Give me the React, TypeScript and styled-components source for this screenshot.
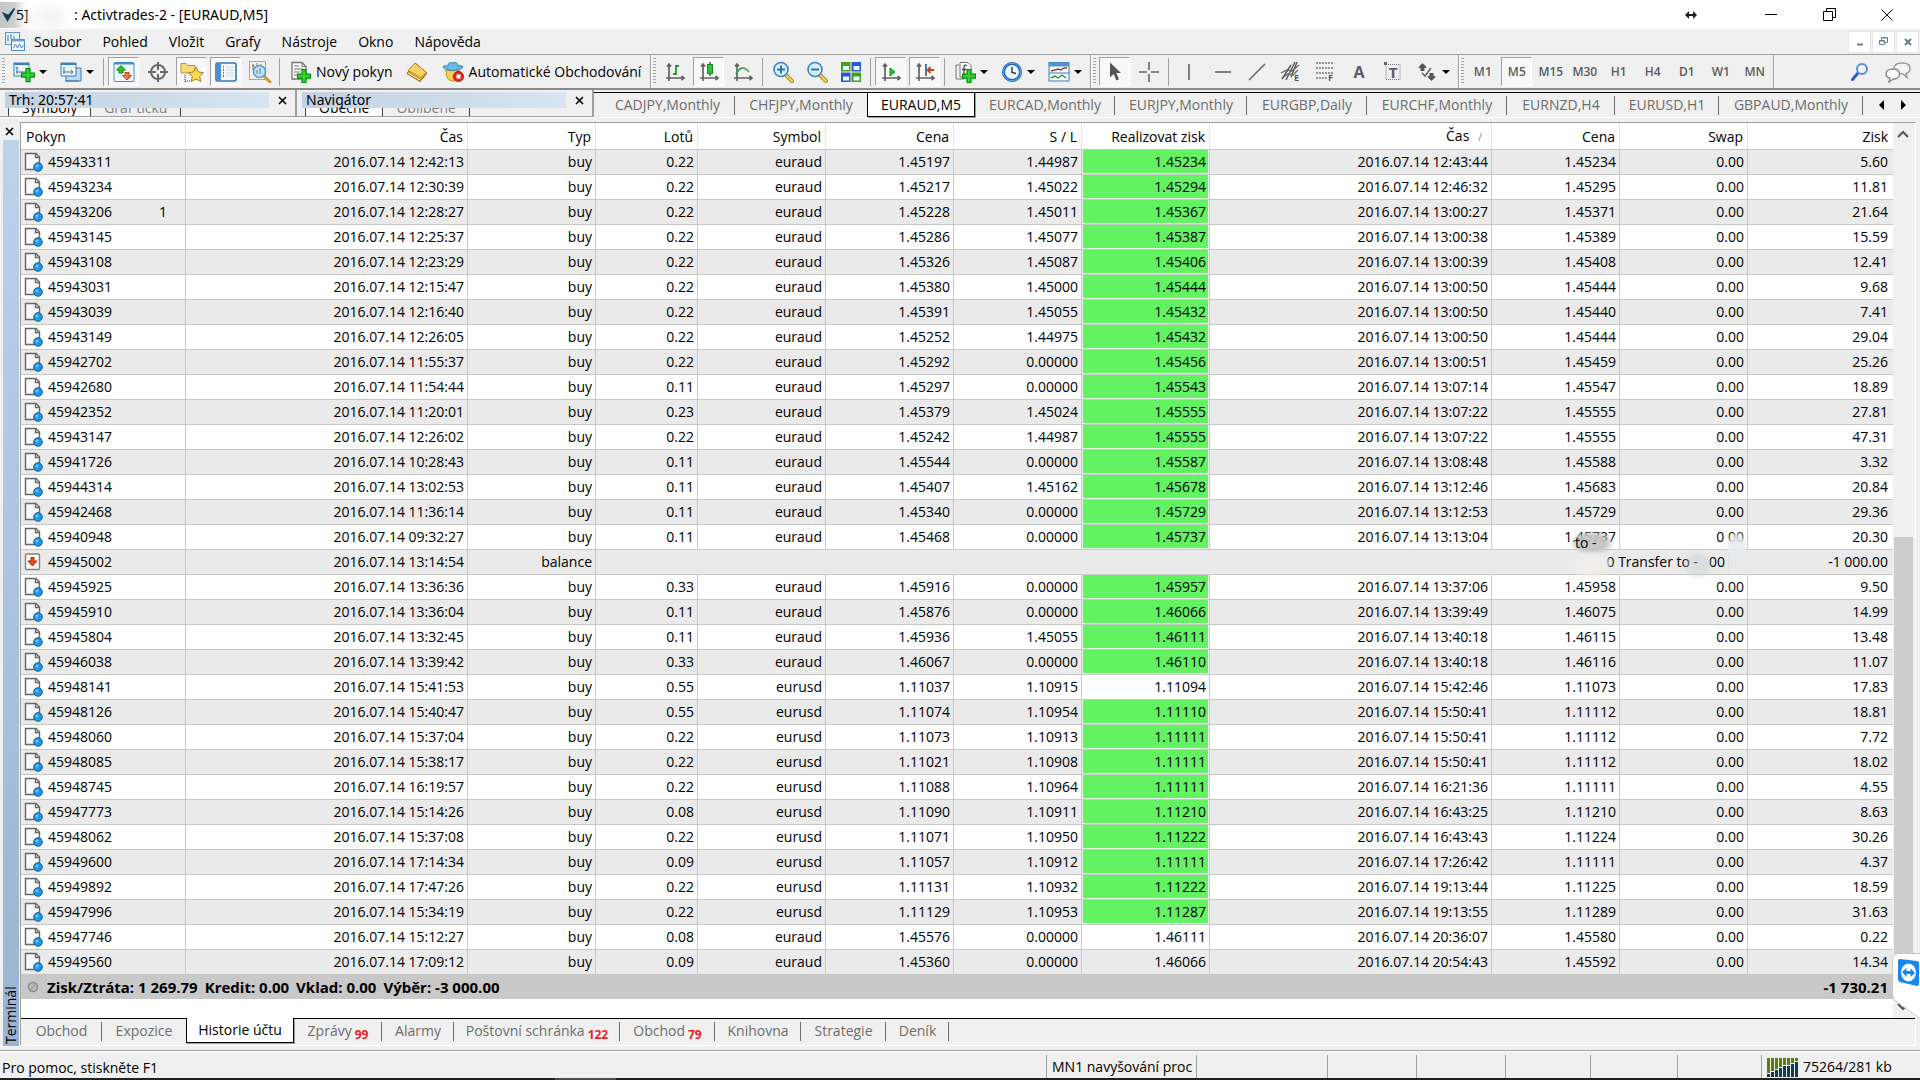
import React from 'react';
import styled, { createGlobalStyle, css } from 'styled-components';

const GlobalStyle = createGlobalStyle`
  *, *::before, *::after { box-sizing: border-box; }
  body { margin: 0; background: #f0f0f0; }
  button { font: inherit; color: inherit; border: 0; padding: 0; margin: 0; background: none; }
`;

const Shell = styled.div`
  min-height: 100vh;
  display: flex;
  flex-direction: column;
  background: #f0f0f0;
  color: #000;
  font-family: "Open Sans", "Noto Sans", sans-serif;
  font-size: 14px;
  line-height: 20px;
  white-space: nowrap;
  overflow: hidden;
`;

/* ---------- title bar and menu ---------- */

const TitleBar = styled.header`
  position: relative;
  display: flex;
  align-items: center;
  height: 29px;
  padding-right: 4px;
  background: #fff;
`;

const AppBadge = styled.div`
  display: flex;
  align-items: center;
  width: 74px;
  height: 26px;
  padding-left: 2px;
  background: linear-gradient(90deg, #c4c4c4 0, #cfcfcf 14px, #fff 26px);
`;

const TitleSmudge = styled.div`
  position: absolute;
  left: 27px;
  top: 2px;
  width: 44px;
  height: 34px;
  background:
    radial-gradient(ellipse at 30% 60%, rgba(250, 250, 250, 1) 0, rgba(250, 250, 250, 0) 60%),
    radial-gradient(ellipse at 50% 50%, rgba(232, 234, 236, 0.9) 0, rgba(240, 240, 240, 0) 70%);
`;

const Title = styled.h1`
  flex: 1;
  margin: 0;
  font-family: "Noto Sans", "Open Sans", sans-serif;
  font-size: 14px;
  font-weight: 400;
`;

const WindowButtons = styled.div<{ $apart?: boolean }>`
  display: flex;
  align-items: center;
  padding-left: ${p => (p.$apart ? '22px' : '0')};
`;

const WindowButton = styled.button`
  display: grid;
  place-items: center;
  width: 58px;
  height: 28px;
`;

const MenuBar = styled.nav`
  display: flex;
  align-items: center;
  height: 26px;
  padding: 0 1px 0 5px;
  border-bottom: 1px solid #a0a0a0;
`;

const MenuItems = styled.div`
  flex: 1;
  display: flex;
  gap: 21px;
  padding-left: 8px;
`;

const MdiButtons = styled.div`
  display: flex;
  gap: 1px;
`;

const MdiButton = styled.button`
  display: grid;
  place-items: center;
  width: 23px;
  height: 22px;
  background: #fff;
  border: 1px solid #e6e6e6;
`;

/* ---------- toolbar ---------- */

const Toolbar = styled.div`
  display: flex;
  height: 35px;
  padding-left: 1px;
  border-bottom: 2px solid #8a8a8a;
`;

const ToolGroup = styled.div`
  display: flex;
  align-items: center;
  gap: 3px;
  padding: 0 3px 0 1px;
  border-right: 1px solid #a0a0a0;
  box-shadow: 1px 0 0 #fff;
  margin-right: 1px;
`;

const Grip = styled.span`
  width: 3px;
  height: 27px;
  background: repeating-linear-gradient(180deg, #a6a6a6 0 1px, #f0f0f0 1px 3px);
`;

const ToolSep = styled.span`
  width: 1px;
  height: 28px;
  margin: 0 1px;
  background: #a0a0a0;
`;

const ToolButton = styled.button<{ $on?: boolean; $drop?: boolean; $text?: boolean }>`
  display: flex;
  align-items: center;
  justify-content: center;
  gap: 4px;
  width: ${p => (p.$text ? 'auto' : p.$drop ? '44px' : '31px')};
  height: 29px;
  padding: ${p => (p.$text ? '0 5px' : '0')};
  border: 1px solid transparent;
  ${p =>
    p.$on &&
    css`
      background: #f8f8f8;
      border-color: #a0a0a0 #fff #fff #a0a0a0;
    `}
`;

const Period = styled(ToolButton)`
  font-size: 12px;
  font-weight: 600;
  color: #5c5c5c;
`;

const Caret = styled.span`
  border: 4px solid transparent;
  border-top-color: #000;
  border-bottom: 0;
`;

const ToolEnd = styled.div`
  flex: 1;
  display: flex;
  align-items: center;
  justify-content: flex-end;
  gap: 1px;
`;

/* ---------- docked panels and chart tabs ---------- */

const DockRow = styled.div`
  display: flex;
  height: 28px;
  border-bottom: 1px solid #fff;
`;

const DockPanel = styled.section`
  display: flex;
  flex-direction: column;
  width: 297px;
  padding: 2px 0 0 5px;
  border-right: 2px solid #a0a0a0;
  border-bottom: 1px solid #a0a0a0;
`;

const DockCaption = styled.div`
  display: flex;
  align-items: center;
  height: 16px;
`;

const DockTitle = styled.h2`
  flex: 1;
  margin: 0;
  padding-left: 4px;
  font-family: "Noto Sans", "Open Sans", sans-serif;
  font-size: 14px;
  font-weight: 400;
  line-height: 16px;
  background: linear-gradient(90deg, #c3d1e0, #d7e4f2);
`;

const DockClose = styled.button`
  display: grid;
  place-items: center;
  width: 26px;
  height: 16px;
`;

const DockTabs = styled.div`
  display: flex;
  align-items: flex-end;
  height: 8px;
  padding-left: 3px;
  overflow: hidden;
`;

const DockTab = styled.button<{ $on?: boolean }>`
  height: 16px;
  padding: 0 13px;
  line-height: 16px;
  color: ${p => (p.$on ? '#000' : '#808080')};
  background: ${p => (p.$on ? '#fff' : 'none')};
  border-right: 1px solid #404040;
  border-left: ${p => (p.$on ? '1px solid #404040' : '0')};
`;

const ChartTabs = styled.div`
  flex: 1;
  display: flex;
  margin-top: 2px;
  padding-left: 6px;
  border-top: 1px solid #000;
`;

const Tab = styled.button<{ $on?: boolean; $next?: boolean; $w: number }>`
  display: flex;
  align-items: center;
  justify-content: center;
  gap: 3px;
  width: ${p => p.$w}px;
  height: 24px;
  color: #6d6d6d;
  background: linear-gradient(#6d6d6d, #6d6d6d) right center / ${p => (p.$next ? '0' : '1px')} 19px no-repeat;
  ${p =>
    p.$on &&
    css`
      height: 25px;
      margin-top: -1px;
      color: #000;
      background: #fff;
      border: 1px solid #000;
      border-top: 0;
      box-shadow: 1px 1px 0 #a0a0a0;
    `}
`;

const ChartTab = styled(Tab)`
  ${p => p.$on && css`border-top: 1px solid #000;`}
`;

const TabCount = styled.span`
  padding-top: 8px;
  font-size: 12px;
  font-weight: 700;
  line-height: 16px;
  color: #ee1c24;
`;

const TabArrows = styled.div`
  display: flex;
  align-items: center;
  gap: 17px;
  padding-left: 15px;
`;

/* ---------- terminal ---------- */

const Terminal = styled.main`
  position: relative;
  flex: 1;
  display: flex;
  padding-top: 4px;
`;

const Side = styled.aside`
  display: flex;
  flex-direction: column;
  width: 20px;
  padding: 0 1px 0 3px;
`;

const SideTitle = styled.div`
  flex: 1;
  padding-top: 2px;
  line-height: 16px;
  background: linear-gradient(0deg, #bdd2eb, #99b4d1);
  writing-mode: vertical-rl;
  transform: rotate(180deg);
`;

const SideClose = styled.button`
  display: grid;
  place-items: center;
  width: 13px;
  height: 18px;
`;

const Frame = styled.div`
  flex: 1;
  min-width: 0;
  display: flex;
  flex-direction: column;
  margin-right: 4px;
  border-top: 1px solid #a0a0a0;
  border-left: 1px solid #a0a0a0;
  border-right: 1px solid #fff;
  border-bottom: 1px solid #fff;
`;

const Sheet = styled.div`
  flex: 1;
  display: flex;
`;

const GridArea = styled.div`
  flex: 1;
  min-width: 0;
  background: #fff;
`;

const Grid = styled.table`
  width: 100%;
  table-layout: fixed;
  border-collapse: separate;
  border-spacing: 0;
`;

const HeadCell = styled.th`
  height: 27px;
  padding: 1px 4px 0 5px;
  font-weight: 400;
  text-align: right;
  border-right: 1px solid #e4e4e4;
  border-bottom: 1px solid #c8c8c8;
  &:first-child { text-align: left; }
  &:last-child { padding-right: 5px; border-right: 0; }
`;

const SortMark = styled.span`
  padding: 0 5px 0 9px;
  font-size: 10px;
  color: #808080;
`;

const Row = styled.tr`
  &:nth-child(odd) { background: #eaeaea; }
`;

const Cell = styled.td<{ $hit?: boolean; $open?: boolean }>`
  position: relative;
  height: 25px;
  padding: 0 3px;
  text-align: right;
  border-right: ${p => (p.$open ? '0' : '1px solid #c8c8c8')};
  border-bottom: 1px solid #c8c8c8;
  ${p =>
    p.$hit &&
    css`
      background: #62f262;
      box-shadow: inset -1px -1px 0 #e9f7e9, inset 1px 0 0 #e9f7e9;
    `}
  &:last-child { padding-right: 5px; border-right: 0; }
`;

const Order = styled.div`
  display: flex;
  align-items: center;
  gap: 4px;
`;

const OrderNote = styled.span`
  flex: 1;
  padding-right: 15px;
  text-align: right;
`;

const Comment = styled.span`
  margin-right: 16px;
  padding-right: 3px;
  white-space: pre;
  border-right: 1px solid #dcdcdc;
`;

const Smudge = styled.span<{ $right: number; $top: number; $w: number; $h: number; $tone: string }>`
  position: absolute;
  z-index: 1;
  right: ${p => p.$right}px;
  top: ${p => p.$top}px;
  width: ${p => p.$w}px;
  height: ${p => p.$h}px;
  padding-left: 6px;
  line-height: ${p => p.$h}px;
  text-align: left;
  background: radial-gradient(closest-side, ${p => p.$tone} 60%, rgba(238, 238, 238, 0) 100%);
`;

const Summary = styled.td`
  height: 24px;
  padding: 0 5px 0 4px;
  font-size: 15px;
  font-weight: 700;
  background: #c8c8c8;
`;

const SummaryLine = styled.div`
  display: flex;
  align-items: center;
  gap: 8px;
`;

const SummaryParts = styled.div`
  flex: 1;
  display: flex;
  gap: 7px;
`;

const ScrollTrack = styled.div`
  display: flex;
  flex-direction: column;
  width: 20px;
  margin-right: 2px;
`;

const ScrollButton = styled.button`
  display: grid;
  place-items: center;
  width: 20px;
  height: 22px;
`;

const ScrollGap = styled.div`
  flex: 392;
`;

const ScrollThumb = styled.div`
  flex: 460;
  margin-left: 1px;
  background: #cdcdcd;
`;

const BottomTabs = styled.div`
  display: flex;
  height: 27px;
  border-top: 1px solid #000;
`;

const RemoteTab = styled.button`
  position: absolute;
  right: 0;
  bottom: 27px;
  width: 28px;
  height: 66px;
`;

/* ---------- status bar ---------- */

const StatusBar = styled.footer`
  display: flex;
  height: 28px;
  margin-top: 4px;
  border-top: 1px solid #a0a0a0;
  box-shadow: inset 0 1px 0 #fff;
`;

const StatusText = styled.div`
  flex: 1;
  padding: 7px 2px 0;
`;

const StatusCell = styled.div<{ $w: number }>`
  display: flex;
  align-items: center;
  gap: 5px;
  width: ${p => p.$w}px;
  margin-top: 4px;
  padding-left: 5px;
  overflow: hidden;
  border-left: 1px solid #a0a0a0;
`;

const ScreenEdge = styled.div`
  height: 2px;
  background: linear-gradient(90deg, #202020 555px, #4c4c4c 555px 616px, #202020 616px);
`;

/* ---------- icons ---------- */

const Drawing = styled.svg`
  display: block;
  flex: none;
  font-family: "Open Sans", "Noto Sans", sans-serif;
  font-weight: 700;
`;

const Svg = ({ w = 22, h = 22, children }: { w?: number; h?: number; children: React.ReactNode }) => (
  <Drawing width={w} height={h} viewBox={`0 0 ${w} ${h}`} fill="none" aria-hidden="true">
    {children}
  </Drawing>
);

const Plus = ({ x = 7, y = 8 }: { x?: number; y?: number }) => (
  <path
    transform={`translate(${x} ${y})`}
    d="M5 .7h4v4.5h4.500v4H9v4.500H5V9.200H.5v-4H5z"
    fill="#2fd52f"
    stroke="#0b8a14"
    strokeWidth="1.2"
  />
);

const Axes = () => (
  <path d="M5 3v17M2 17h18M3 5.500 5 3l2 2.500M17.500 15l2.500 2-2.500 2" stroke="#626262" strokeWidth="1.7" />
);

const Lens = ({ plus }: { plus?: boolean }) => (
  <Svg>
    <path d="m14 14 6 6" stroke="#b98a1c" strokeWidth="4" strokeLinecap="round" />
    <path d="m14 14 6 6" stroke="#f3d25a" strokeWidth="2" strokeLinecap="round" />
    <circle cx="9" cy="8.500" r="7" fill="#d6effc" stroke="#3b84c4" strokeWidth="1.600" />
    <path d={plus ? 'M5 8.500h8M9 4.500v8' : 'M5 8.500h8'} stroke="#2f6fae" strokeWidth="2" />
  </Svg>
);

const icons: Record<string, React.ReactNode> = {
  newChart: (
    <Svg>
      <rect x="1" y="2" width="15" height="13" fill="#eaf4fd" stroke="#3b7fb8" />
      <path d="M1 3h15" stroke="#3b7fb8" strokeWidth="2" />
      <path d="M4 6v7M3 11h10M3 7.500 4 6l1 1.500" stroke="#4b7796" />
      <Plus x={8} y={7} />
    </Svg>
  ),
  profiles: (
    <Svg>
      <path d="M6 7h15v13H6z" fill="#bcd9f2" stroke="#3b7fb8" />
      <path d="M1 2h15v13H1z" fill="#eaf4fd" stroke="#3b7fb8" />
      <path d="M1 3h15" stroke="#3b7fb8" strokeWidth="2" />
      <path d="M4 6v7M3 11h10M11 9l2 2-2 2M5 20h14" stroke="#4b7796" />
    </Svg>
  ),
  market: (
    <Svg>
      <rect x="1" y="1.500" width="20" height="19" rx="1" fill="#f3f9fe" stroke="#3f8fd0" />
      <path d="M1 2.500h20" stroke="#3f8fd0" strokeWidth="2" />
      <path d="M4 6h14M4 9h14M4 12h14M4 15h14" stroke="#d9e4ee" strokeDasharray="2 1" />
      <path d="m8 4.500 4.500 4.500H10v3H6V9H3.500z" fill="#2cc02c" stroke="#178a17" />
      <path d="m14 19-4.500-4.500H12v-3h4v3h2.500z" fill="#f4723d" stroke="#c8431b" />
    </Svg>
  ),
  target: (
    <Svg>
      <circle cx="11" cy="11" r="7" stroke="#6a6a6a" strokeWidth="2" />
      <path d="M11 1v8M11 13v8M1 11h8M13 11h8" stroke="#6a6a6a" strokeWidth="2" />
    </Svg>
  ),
  favorites: (
    <Svg w={24} h={22}>
      <path d="M1 12V2.500h5l1.500 2H15V12z" fill="#f7dc7e" stroke="#b8922e" />
      <path d="M5 14v7M5 20h5" stroke="#333" strokeDasharray="1 1" />
      <path d="m16 6 2.400 5 5 .6-3.700 3.600 1 5.300L16 18l-4.700 2.500 1-5.300-3.700-3.600 5-.6z" fill="#fbd855" stroke="#a8811d" />
    </Svg>
  ),
  navigator: (
    <Svg>
      <rect x="1" y="2" width="20" height="18" rx="1.500" fill="#f6faff" stroke="#3474b4" strokeWidth="1.600" />
      <rect x="2" y="3" width="4" height="16" fill="#4f91cf" />
      <path d="M8 6h1M8 12h1" stroke="#e02c2c" strokeWidth="1.600" />
      <path d="M8 9h1M8 15h1" stroke="#333" strokeWidth="1.600" />
      <path d="M11 6h8M11 9h8M11 12h8M11 15h8" stroke="#c5d5e6" />
    </Svg>
  ),
  tester: (
    <Svg w={24} h={22}>
      <rect x="1.500" y=".5" width="16" height="18" fill="#f4f1ea" stroke="#a9a39a" />
      <path d="M5 3v6M4 5h3M9 2v4M13 3v6M15 5v4" stroke="#777" />
      <path d="m16 15 6 6" stroke="#d19b2b" strokeWidth="3" strokeLinecap="round" />
      <circle cx="11.500" cy="10.500" r="6" fill="#bfe0f6" stroke="#5b9bcd" strokeWidth="1.600" />
      <path d="M9 13V9M12 13V7" stroke="#6fa5cf" strokeWidth="1.500" />
    </Svg>
  ),
  newOrder: (
    <Svg>
      <path d="M2 1.500h10l4 4V18H2z" fill="#fbfbfb" stroke="#757575" strokeWidth="1.300" />
      <path d="M12 1.500v4h4M4 5h5M4 8h9M4 11h6M4 14h4" stroke="#757575" />
      <Plus x={7} y={8} />
    </Svg>
  ),
  book: (
    <Svg>
      <path d="m9 2 12 10-7 8.500L1 12.500z" fill="#d9a52c" stroke="#8a600c" />
      <path d="m9 2 11.500 9.500-6 5.500L2 9.500z" fill="#f6d163" stroke="#b98a1c" />
      <path d="m2 12 12 7" stroke="#fff1c0" />
    </Svg>
  ),
  expert: (
    <Svg w={23} h={22}>
      <path d="M4 9c0 7 2 11 7 11 4 0 6-4 6-11z" fill="#f6cf52" stroke="#b98a1c" />
      <path d="M1 6c2 4 16 5 20 0-1-2-3-1-5-1 0-3-2-4-5-3-3-1-5 0-5 3-2 0-4-1-5 1z" fill="#6fb9e6" stroke="#2f7fb6" />
      <circle cx="16.500" cy="15.500" r="5" fill="#e22b22" stroke="#a9140d" />
      <rect x="14.500" y="13.500" width="4" height="4" fill="#fff" />
    </Svg>
  ),
  bars: (
    <Svg>
      <Axes />
      <path d="M12 4v10M12 5h3M9 13h3" stroke="#1f9a2b" strokeWidth="1.800" />
    </Svg>
  ),
  candles: (
    <Svg>
      <Axes />
      <path d="M12 1v14" stroke="#178a22" strokeWidth="1.600" />
      <rect x="9.500" y="3.500" width="5" height="9" fill="#29c43a" stroke="#178a22" />
    </Svg>
  ),
  line: (
    <Svg>
      <Axes />
      <path d="M4 13c4-7 8-8 13-2" stroke="#3c9b47" strokeWidth="1.600" />
    </Svg>
  ),
  zoomIn: <Lens plus />,
  zoomOut: <Lens />,
  tile: (
    <Svg>
      <rect x="1" y="1" width="9.500" height="9.500" fill="#3fa21e" />
      <rect x="11.500" y="1" width="9.500" height="9.500" fill="#2b58cf" />
      <rect x="1" y="11.500" width="9.500" height="9.500" fill="#2b58cf" />
      <rect x="11.500" y="11.500" width="9.500" height="9.500" fill="#3fa21e" />
      <path d="M3 5h6v4H3zM13.500 5h6v4h-6zM3 15.500h6v4H3zM13.500 15.500h6v4h-6z" fill="#eef6ff" />
    </Svg>
  ),
  scroll: (
    <Svg>
      <Axes />
      <path d="m10 7 5 4-5 4z" fill="#2cc43c" stroke="#178a22" />
    </Svg>
  ),
  shift: (
    <Svg>
      <Axes />
      <path d="M12 3v12" stroke="#2a6fa8" strokeWidth="1.800" />
      <path d="M20 9h-6M16.500 6 13.500 9l3 3" stroke="#c8431b" strokeWidth="1.800" />
    </Svg>
  ),
  indicators: (
    <Svg>
      <path d="M6 1.500h8l3 3V16H6z" fill="#fff" stroke="#757575" />
      <path d="M2 4h3M2 4v14h8" stroke="#757575" />
      <path d="M13 4.500c-2-1-3 0-3 2V13M8 8.500h4.500" stroke="#444" strokeWidth="1.300" />
      <Plus x={8} y={8} />
    </Svg>
  ),
  clock: (
    <Svg>
      <circle cx="11" cy="11" r="8.500" fill="#eaf5fe" stroke="#1d63b8" strokeWidth="3" />
      <circle cx="11" cy="11" r="8.800" stroke="#64aef0" />
      <path d="M11 6v5.500l4 1" stroke="#333" strokeWidth="1.400" />
    </Svg>
  ),
  template: (
    <Svg>
      <rect x="1" y="1.500" width="20" height="18.500" fill="#f5fafe" stroke="#3b7fb8" />
      <path d="M1 3.500h20" stroke="#4d94d0" strokeWidth="4" />
      <path d="M1 12h20" stroke="#3b7fb8" />
      <path d="m3 10 4-1 3-1 3 1 3-2h3" stroke="#a8381f" strokeWidth="1.400" />
      <path d="m3 17 4-2 3 2 4-3 4 3" stroke="#2a8f37" strokeWidth="1.400" />
    </Svg>
  ),
  cursor: (
    <Svg>
      <path d="M6 1.500v15l3.700-3.500 2.600 6.500 2.700-1.200-2.700-6.300H17z" fill="#555" />
    </Svg>
  ),
  cross: (
    <Svg>
      <path d="M11 1v8M11 13v8M1 11h8M13 11h8" stroke="#666" strokeWidth="1.600" />
    </Svg>
  ),
  vline: <Svg><path d="M11 3v16" stroke="#666" strokeWidth="1.600" /></Svg>,
  hline: <Svg><path d="M3 11h16" stroke="#666" strokeWidth="1.600" /></Svg>,
  trend: <Svg><path d="M3 19 19 3" stroke="#666" strokeWidth="1.600" /></Svg>,
  channel: (
    <Svg w={24} h={24}>
      <path d="M3 19 12 5M7 20 16 2M12 17l6-15" stroke="#555" strokeWidth="1.400" />
      <path d="m2 13 6-3 5 1 7-6M3 18l6-4 5 1 5-5" stroke="#666" strokeWidth="1.200" />
      <text x="15" y="21" fontSize="9" fill="#555">E</text>
    </Svg>
  ),
  fibo: (
    <Svg w={24} h={24}>
      <path d="M3 3h18M3 8h18M3 13h18M3 18h11" stroke="#777" strokeWidth="1.500" strokeDasharray="2 1" />
      <text x="15" y="21" fontSize="9" fill="#555">F</text>
    </Svg>
  ),
  text: (
    <Svg>
      <text x="11" y="17" textAnchor="middle" fontSize="16" fill="#5c5c5c">A</text>
    </Svg>
  ),
  label: (
    <Svg>
      <rect x="4" y="3.500" width="14" height="15" stroke="#777" strokeDasharray="1 1" />
      <rect x="2" y="1" width="3" height="3" fill="#666" />
      <text x="11" y="17" textAnchor="middle" fontSize="15" fill="#5c5c5c">T</text>
    </Svg>
  ),
  shapes: (
    <Svg>
      <path d="m6.500 2 4.500 4.500-2.500.5v3h-4V7L2 6.500zM15.500 20 11 15.500l2.500-.5v-3h4v3l2.500.5z" fill="#555" />
      <path d="m6 12 3 3 6-8" stroke="#666" strokeWidth="1.600" />
    </Svg>
  ),
  search: (
    <Svg>
      <path d="m3.500 18.500 5-6" stroke="#2f5fc0" strokeWidth="3" strokeLinecap="round" />
      <circle cx="13" cy="8" r="5" fill="#eef4fd" stroke="#5f8cdc" strokeWidth="2" />
    </Svg>
  ),
  chat: (
    <Svg w={28} h={22}>
      <path d="M18 2c5 0 8 2 8 5.500S24 12 22 12.500l1 4-4-3.500c-6 0-9-2-9-5.500S13 2 18 2z" fill="#f4f4f4" stroke="#999" strokeWidth="1.400" />
      <path d="M9 8c4 0 6.500 2 6.500 5S13 18 9.500 18L5 21l1-3.700C3 16.500 2 15 2 13c0-3 3-5 7-5z" fill="#f8f8f8" stroke="#888" strokeWidth="1.400" />
    </Svg>
  ),
};

const CloseGlyph = () => (
  <Svg w={9} h={9}><path d="m1 1 7 7M8 1 1 8" stroke="#000" strokeWidth="1.600" /></Svg>
);

const OrderIcon = () => (
  <Svg w={20} h={20}>
    <path d="M1.500 1.500H12l3.500 3.500v12.500h-14z" fill="#f8f8f8" stroke="#666" strokeWidth="1.400" />
    <path d="M11.500 1.500V5.500h4" stroke="#666" strokeWidth="1.400" />
    <circle cx="14" cy="15" r="4.300" fill="#1f97e8" stroke="#0f5f9c" />
    <circle cx="13" cy="14" r="1.500" fill="#6cc3f8" />
  </Svg>
);

const BalanceIcon = () => (
  <Svg w={20} h={20}>
    <rect x="1.500" y="2" width="14" height="15.500" rx="1" fill="#fdf8f4" stroke="#8a7f7a" strokeWidth="1.400" />
    <path d="M7 5.500h3V9h3l-4.500 5L4 9h3z" fill="#ea4c1d" stroke="#a92a08" />
  </Svg>
);

/* ---------- data ---------- */

type Tool = { id: string; label: string; on?: boolean; drop?: boolean; text?: string };

const mainTools: (Tool | null)[] = [
  { id: 'newChart', label: 'Nový graf', drop: true },
  { id: 'profiles', label: 'Profily', drop: true },
  null,
  { id: 'market', label: 'Trh', on: true },
  { id: 'target', label: 'Okno dat' },
  { id: 'favorites', label: 'Navigátor', on: true },
  { id: 'navigator', label: 'Terminál', on: true },
  { id: 'tester', label: 'Tester strategií' },
  null,
  { id: 'newOrder', label: 'Nový pokyn', text: 'Nový pokyn' },
  { id: 'book', label: 'MetaEditor' },
  { id: 'expert', label: 'Automatické Obchodování', text: 'Automatické Obchodování' },
];

const chartTools: (Tool | null)[] = [
  { id: 'bars', label: 'Sloupce' },
  { id: 'candles', label: 'Svíčky', on: true },
  { id: 'line', label: 'Čára' },
  null,
  { id: 'zoomIn', label: 'Přiblížit' },
  { id: 'zoomOut', label: 'Oddálit' },
  { id: 'tile', label: 'Dlaždice' },
  null,
  { id: 'scroll', label: 'Posun grafu', on: true },
  { id: 'shift', label: 'Odsazení grafu', on: true },
  null,
  { id: 'indicators', label: 'Indikátory', drop: true },
  { id: 'clock', label: 'Periody', drop: true },
  { id: 'template', label: 'Šablony', drop: true },
];

const drawTools: (Tool | null)[] = [
  { id: 'cursor', label: 'Kurzor', on: true },
  { id: 'cross', label: 'Nitkový kříž' },
  null,
  { id: 'vline', label: 'Svislá čára' },
  { id: 'hline', label: 'Vodorovná čára' },
  { id: 'trend', label: 'Trendová čára' },
  { id: 'channel', label: 'Kanál' },
  { id: 'fibo', label: 'Fibonacci' },
  { id: 'text', label: 'Text' },
  { id: 'label', label: 'Popisek' },
  { id: 'shapes', label: 'Šipky', drop: true },
];

const periods = ['M1', 'M5', 'M15', 'M30', 'H1', 'H4', 'D1', 'W1', 'MN'];

const chartTabs: [string, number][] = [
  ['CADJPY,Monthly', 135], ['CHFJPY,Monthly', 132], ['EURAUD,M5', 108], ['EURCAD,Monthly', 140],
  ['EURJPY,Monthly', 132], ['EURGBP,Daily', 120], ['EURCHF,Monthly', 140], ['EURNZD,H4', 108],
  ['EURUSD,H1', 104], ['GBPAUD,Monthly', 144],
];

const bottomTabs: [string, number, string?][] = [
  ['Obchod', 81], ['Expozice', 84], ['Historie účtu', 108], ['Zprávy', 88, '99'], ['Alarmy', 72],
  ['Poštovní schránka', 166, '122'], ['Obchod', 95, '79'], ['Knihovna', 86], ['Strategie', 85], ['Deník', 63],
];

const columns: [string, number?][] = [
  ['Pokyn', 165], ['Čas', 282], ['Typ', 128], ['Lotů', 102], ['Symbol', 128], ['Cena', 128], ['S / L', 128],
  ['Realizovat zisk', 128], ['Čas', 282], ['Cena', 128], ['Swap', 128], ['Zisk'],
];

/* order | open time | lots | symbol | price | stop | take | close time | close price | profit ; "-" after take = not hit */
const deals = `45943311|12:42:13|0.22|euraud|1.45197|1.44987|1.45234|12:43:44|1.45234|5.60
45943234|12:30:39|0.22|euraud|1.45217|1.45022|1.45294|12:46:32|1.45295|11.81
45943206|12:28:27|0.22|euraud|1.45228|1.45011|1.45367|13:00:27|1.45371|21.64
45943145|12:25:37|0.22|euraud|1.45286|1.45077|1.45387|13:00:38|1.45389|15.59
45943108|12:23:29|0.22|euraud|1.45326|1.45087|1.45406|13:00:39|1.45408|12.41
45943031|12:15:47|0.22|euraud|1.45380|1.45000|1.45444|13:00:50|1.45444|9.68
45943039|12:16:40|0.22|euraud|1.45391|1.45055|1.45432|13:00:50|1.45440|7.41
45943149|12:26:05|0.22|euraud|1.45252|1.44975|1.45432|13:00:50|1.45444|29.04
45942702|11:55:37|0.22|euraud|1.45292|0.00000|1.45456|13:00:51|1.45459|25.26
45942680|11:54:44|0.11|euraud|1.45297|0.00000|1.45543|13:07:14|1.45547|18.89
45942352|11:20:01|0.23|euraud|1.45379|1.45024|1.45555|13:07:22|1.45555|27.81
45943147|12:26:02|0.22|euraud|1.45242|1.44987|1.45555|13:07:22|1.45555|47.31
45941726|10:28:43|0.11|euraud|1.45544|0.00000|1.45587|13:08:48|1.45588|3.32
45944314|13:02:53|0.11|euraud|1.45407|1.45162|1.45678|13:12:46|1.45683|20.84
45942468|11:36:14|0.11|euraud|1.45340|0.00000|1.45729|13:12:53|1.45729|29.36
45940948|09:32:27|0.11|euraud|1.45468|0.00000|1.45737|13:13:04|1.45737|20.30
45945002|13:14:54|balance
45945925|13:36:36|0.33|euraud|1.45916|0.00000|1.45957|13:37:06|1.45958|9.50
45945910|13:36:04|0.11|euraud|1.45876|0.00000|1.46066|13:39:49|1.46075|14.99
45945804|13:32:45|0.11|euraud|1.45936|1.45055|1.46111|13:40:18|1.46115|13.48
45946038|13:39:42|0.33|euraud|1.46067|0.00000|1.46110|13:40:18|1.46116|11.07
45948141|15:41:53|0.55|eurusd|1.11037|1.10915|1.11094-|15:42:46|1.11073|17.83
45948126|15:40:47|0.55|eurusd|1.11074|1.10954|1.11110|15:50:41|1.11112|18.81
45948060|15:37:04|0.22|eurusd|1.11073|1.10913|1.11111|15:50:41|1.11112|7.72
45948085|15:38:17|0.22|eurusd|1.11021|1.10908|1.11111|15:50:41|1.11112|18.02
45948745|16:19:57|0.22|eurusd|1.11088|1.10964|1.11111|16:21:36|1.11111|4.55
45947773|15:14:26|0.08|eurusd|1.11090|1.10911|1.11210|16:43:25|1.11210|8.63
45948062|15:37:08|0.22|eurusd|1.11071|1.10950|1.11222|16:43:43|1.11224|30.26
45949600|17:14:34|0.09|eurusd|1.11057|1.10912|1.11111|17:26:42|1.11111|4.37
45949892|17:47:26|0.22|eurusd|1.11131|1.10932|1.11222|19:13:44|1.11225|18.59
45947996|15:34:19|0.22|eurusd|1.11129|1.10953|1.11287|19:13:55|1.11289|31.63
45947746|15:12:27|0.08|euraud|1.45576|0.00000|1.46111-|20:36:07|1.45580|0.22
45949560|17:09:12|0.09|euraud|1.45360|0.00000|1.46066-|20:54:43|1.45592|14.34`
  .split('\n')
  .map(line => line.split('|'));

const day = '2016.07.14 ';

/* ---------- parts ---------- */

const Tools = ({ items }: { items: (Tool | null)[] }) => (
  <ToolGroup>
    <Grip />
    {items.map((t, i) =>
      t ? (
        <ToolButton key={t.id} aria-label={t.label} $on={t.on} $drop={t.drop} $text={!!t.text}>
          {icons[t.id]}
          {t.text}
          {t.drop && <Caret />}
        </ToolButton>
      ) : (
        <ToolSep key={i} />
      )
    )}
  </ToolGroup>
);

const Dock = ({ title, tabs }: { title: string; tabs: string[] }) => (
  <DockPanel>
    <DockCaption>
      <DockTitle>{title}</DockTitle>
      <DockClose aria-label="Zavřít"><CloseGlyph /></DockClose>
    </DockCaption>
    <DockTabs>
      {tabs.map((t, i) => <DockTab key={t} $on={i === 0}>{t}</DockTab>)}
    </DockTabs>
  </DockPanel>
);

const DealRow = ({ deal }: { deal: string[] }) => {
  const [id, opened, lots, symbol, price, stop, take, closed, closePrice, profit] = deal;
  if (lots === 'balance') {
    return (
      <Row>
        <Cell><Order><BalanceIcon />{id}</Order></Cell>
        <Cell>{day + opened}</Cell>
        <Cell>balance</Cell>
        <Cell colSpan={8} $open>
          <Comment>{'0 Transfer to -   00'}</Comment>
          <Smudge $right={134} $top={0} $w={46} $h={28} $tone="rgba(240,238,237,0.95)" />
          <Smudge $right={34} $top={0} $w={32} $h={30} $tone="rgba(196,202,206,0.4)" />
        </Cell>
        <Cell>-1 000.00</Cell>
      </Row>
    );
  }
  const smeared = id === '45940948';
  return (
    <Row>
      <Cell>
        <Order>
          <OrderIcon />
          {id}
          {id === '45943206' && <OrderNote>1</OrderNote>}
        </Order>
      </Cell>
      <Cell>{day + opened}</Cell>
      <Cell>buy</Cell>
      <Cell>{lots}</Cell>
      <Cell>{symbol}</Cell>
      <Cell>{price}</Cell>
      <Cell>{stop}</Cell>
      <Cell $hit={!take.endsWith('-')}>{take.replace('-', '')}</Cell>
      <Cell>{day + closed}</Cell>
      <Cell>
        {closePrice}
        {smeared && <Smudge $right={4} $top={5} $w={46} $h={26} $tone="rgba(196,196,196,0.92)">to -</Smudge>}
      </Cell>
      <Cell>
        {smeared ? '0 00' : '0.00'}
        {smeared && <Smudge $right={-2} $top={5} $w={24} $h={36} $tone="rgba(232,234,238,0.85)" />}
      </Cell>
      <Cell>{profit}</Cell>
    </Row>
  );
};

export default function App() {
  return (
    <Shell>
      <GlobalStyle />
      <TitleBar>
        <AppBadge>
          <Svg w={14} h={20}>
            <path d="m1.500 8.500 4 7 7-12-6 7z" fill="#12405f" stroke="#12405f" strokeWidth="1.500" />
          </Svg>
          5]
        </AppBadge>
        <TitleSmudge />
        <Title>: Activtrades-2 - [EURAUD,M5]</Title>
        <WindowButtons>
          <WindowButton aria-label="Vzdálená relace">
            <Svg w={12} h={8}><path d="M0 4l4-4v3h4V0l4 4-4 4V5H4v3z" fill="#222" /></Svg>
          </WindowButton>
        </WindowButtons>
        <WindowButtons $apart>
          <WindowButton aria-label="Minimalizovat"><Svg w={12} h={12}><path d="M0 5.500h12" stroke="#000" /></Svg></WindowButton>
          <WindowButton aria-label="Obnovit">
            <Svg w={13} h={13}><path d="M.5 3.500h9v9h-9zM3.500 3V.5h9v9H10" stroke="#000" /></Svg>
          </WindowButton>
          <WindowButton aria-label="Zavřít"><Svg w={12} h={12}><path d="m.5.5 11 11M11.500.5l-11 11" stroke="#000" /></Svg></WindowButton>
        </WindowButtons>
      </TitleBar>

      <MenuBar>
        <Svg w={21} h={21}>
          <rect x=".5" y="1.500" width="14" height="12" fill="#e7f1fc" stroke="#5c93cf" />
          <path d="M3 4v6M6 3v5M9 5v4" stroke="#3f78bd" />
          <rect x="6.500" y="8.500" width="13" height="11" fill="#f4f9ff" stroke="#4f86c9" />
          <path d="M7 9.500h13" stroke="#6fa3e0" strokeWidth="2" />
          <path d="m8.500 17 2-4 2 4 2-4 2 4 2-3" stroke="#4d7fd0" />
        </Svg>
        <MenuItems>
          {['Soubor', 'Pohled', 'Vložit', 'Grafy', 'Nástroje', 'Okno', 'Nápověda'].map(m => <button key={m}>{m}</button>)}
        </MenuItems>
        <MdiButtons>
          <MdiButton aria-label="Minimalizovat graf"><Svg w={8} h={8}><path d="M1 6.500h6" stroke="#6b7b8c" strokeWidth="2" /></Svg></MdiButton>
          <MdiButton aria-label="Obnovit graf">
            <Svg w={9} h={9}><path d="M.5 3.500h5v4h-5zM2.500 3V.5h6v5H6M2.500 1h6M.5 4h5" stroke="#6b7b8c" /></Svg>
          </MdiButton>
          <MdiButton aria-label="Zavřít graf"><Svg w={8} h={8}><path d="m1 1 6 6M7 1 1 7" stroke="#6b7b8c" strokeWidth="2" /></Svg></MdiButton>
        </MdiButtons>
      </MenuBar>

      <Toolbar>
        <Tools items={mainTools} />
        <Tools items={chartTools} />
        <Tools items={drawTools} />
        <ToolGroup>
          <Grip />
          {periods.map(p => <Period key={p} $on={p === 'M5'}>{p}</Period>)}
        </ToolGroup>
        <ToolEnd>
          <ToolButton aria-label="Hledat">{icons.search}</ToolButton>
          <ToolButton aria-label="Zprávy" $drop>{icons.chat}</ToolButton>
        </ToolEnd>
      </Toolbar>

      <DockRow>
        <Dock title="Trh: 20:57:41" tabs={['Symboly', 'Graf ticku']} />
        <Dock title="Navigátor" tabs={['Obecné', 'Oblíbené']} />
        <ChartTabs>
          {chartTabs.map(([name, w], i) => (
            <ChartTab key={name} $w={w} $on={i === 2} $next={i === 1}>{name}</ChartTab>
          ))}
          <TabArrows>
            <button aria-label="Předchozí"><Svg w={6} h={10}><path d="M6 0v10L1 5z" fill="#000" /></Svg></button>
            <button aria-label="Další"><Svg w={6} h={10}><path d="M0 0v10l5-5z" fill="#000" /></Svg></button>
          </TabArrows>
        </ChartTabs>
      </DockRow>

      <Terminal>
        <Side>
          <SideClose aria-label="Zavřít terminál"><CloseGlyph /></SideClose>
          <SideTitle>Terminál</SideTitle>
        </Side>
        <Frame>
          <Sheet>
            <GridArea>
              <Grid>
                <colgroup>
                  {columns.map(([, w], i) => <col key={i} style={{ width: w }} />)}
                </colgroup>
                <thead>
                  <tr>
                    {columns.map(([name], i) => (
                      <HeadCell key={i} scope="col">{name}{i === 8 && <SortMark>/</SortMark>}</HeadCell>
                    ))}
                  </tr>
                </thead>
                <tbody>
                  {deals.map(d => <DealRow key={d[0]} deal={d} />)}
                </tbody>
                <tfoot>
                  <tr>
                    <Summary colSpan={12}>
                      <SummaryLine>
                        <Svg w={14} h={12}>
                          <circle cx="8" cy="6" r="4.500" fill="#bdbdbd" stroke="#8a8a8a" strokeWidth="1.400" />
                          <path d="m5.500 8.500 5-5" stroke="#8a8a8a" />
                        </Svg>
                        <SummaryParts>
                          <span>Zisk/Ztráta: 1 269.79</span>
                          <span>Kredit: 0.00</span>
                          <span>Vklad: 0.00</span>
                          <span>Výběr: -3 000.00</span>
                        </SummaryParts>
                        <span>-1 730.21</span>
                      </SummaryLine>
                    </Summary>
                  </tr>
                </tfoot>
              </Grid>
            </GridArea>
            <ScrollTrack>
              <ScrollButton aria-label="Nahoru"><Svg w={12} h={8}><path d="m1 7 5-5 5 5" stroke="#555" strokeWidth="2" /></Svg></ScrollButton>
              <ScrollGap />
              <ScrollThumb />
              <ScrollButton aria-label="Dolů"><Svg w={12} h={8}><path d="m1 1 5 5 5-5" stroke="#555" strokeWidth="2" /></Svg></ScrollButton>
            </ScrollTrack>
          </Sheet>
          <BottomTabs>
            {bottomTabs.map(([name, w, count], i) => (
              <Tab key={i} $w={w} $on={i === 2} $next={i === 1}>
                {name}
                {count && <TabCount>{count}</TabCount>}
              </Tab>
            ))}
          </BottomTabs>
        </Frame>
        <RemoteTab aria-label="TeamViewer">
          <Svg w={28} h={66}>
            <path d="M28 .5H6Q.5 1 .5 8v32q0 7 6 10L28 65.500" fill="#fff" stroke="#c4c8cc" />
            <path d="M6 8q0-2 2-2l17 2q2 0 2 2v21q0 2-2 2L8 29q-2-1-2-3z" fill="#1787ee" />
            <ellipse cx="16.500" cy="19.500" rx="7.500" ry="9" fill="#fff" />
            <path d="m10 19 4.500-4v3h4v-3l4.500 5-4.500 4v-3h-4v3z" fill="#1787ee" />
          </Svg>
        </RemoteTab>
      </Terminal>

      <StatusBar>
        <StatusText>Pro pomoc, stiskněte F1</StatusText>
        <StatusCell $w={150}>MN1 navyšování proc</StatusCell>
        {[131, 89, 89, 85, 87, 84].map((w, i) => <StatusCell key={i} $w={w} />)}
        <StatusCell $w={159}>
          <Svg w={31} h={20}>
            {[0, 1, 2, 3, 4, 5, 6, 7].map(i => (
              <g key={i}>
                <rect x={i * 4} y="1" width="3" height={15 - i * 2 + (i > 4 ? 2 : 0)} fill="#5f7a12" />
                <rect x={i * 4} y={17 - i * 2 + (i > 4 ? 2 : 0)} width="3" height={3 + i * 2 - (i > 4 ? 2 : 0)} fill="#0f3c56" />
              </g>
            ))}
          </Svg>
          75264/281 kb
        </StatusCell>
      </StatusBar>
      <ScreenEdge />
    </Shell>
  );
}
